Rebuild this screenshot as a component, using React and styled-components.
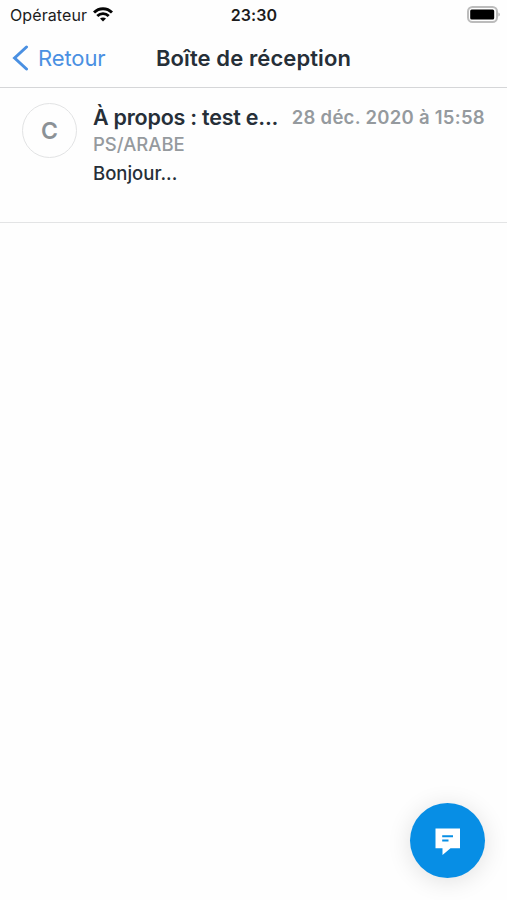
import React from "react";
import styled, { createGlobalStyle } from "styled-components";

const GlobalStyle = createGlobalStyle`
  * { box-sizing: border-box; }
  body { margin: 0; background: #fefefe; }
`;

const Screen = styled.div`
  width: 100%;
  height: 900px;
  display: flex;
  flex-direction: column;
  background: #fefefe;
  color: #262f38;
  font-family: Inter, "Liberation Sans", sans-serif;
  overflow: hidden;
`;

const StatusBar = styled.header`
  height: 30px;
  flex: none;
  display: grid;
  grid-template-columns: 1fr auto 1fr;
  align-items: center;
  padding: 0 7px 0 10px;
  color: #1c1c1c;
`;

const Carrier = styled.div`
  display: flex;
  align-items: center;
  gap: 6px;
  font-size: 16px;
  line-height: 30px;
  letter-spacing: 0.1px;
`;

const WifiIcon = styled.svg`
  display: block;
  margin-bottom: 1px;
`;

const Clock = styled.time`
  font-size: 16px;
  font-weight: 600;
  line-height: 30px;
  letter-spacing: 0.1px;
  margin-right: 2px;
`;

const BatteryIcon = styled.svg`
  justify-self: end;
  display: block;
  margin-bottom: 2px;
`;

const NavBar = styled.nav`
  height: 58px;
  flex: none;
  display: grid;
  grid-template-columns: 1fr auto 1fr;
  align-items: center;
  padding: 0 12px 2px;
  border-bottom: 1px solid #d5d6d8;
`;

const BackButton = styled.button`
  display: flex;
  align-items: center;
  gap: 9px;
  padding: 0;
  border: 0;
  background: none;
  color: #4a90e2;
  font: 400 22px/28px Inter, sans-serif;
  letter-spacing: -0.1px;
`;

const Title = styled.h1`
  margin: 0;
  font-size: 22px;
  font-weight: 600;
  line-height: 28px;
  letter-spacing: 0.1px;
`;

const MessageRow = styled.article`
  height: 135px;
  flex: none;
  display: flex;
  gap: 16px;
  padding: 15px 22px 0;
  border-bottom: 1px solid #e3e4e5;
`;

const Avatar = styled.div`
  width: 55px;
  height: 55px;
  flex: none;
  display: flex;
  align-items: center;
  justify-content: center;
  border: 1px solid #e2e3e4;
  border-radius: 50%;
  color: #8b9196;
  font-size: 23px;
  font-weight: 600;
`;

const MessageBody = styled.div`
  flex: 1;
  min-width: 0;
`;

const Heading = styled.div`
  display: flex;
  justify-content: space-between;
  height: 27px;
  line-height: 28px;
  white-space: nowrap;
`;

const Subject = styled.span`
  font-size: 21.5px;
  font-weight: 600;
  letter-spacing: -0.23px;
`;

const SentAt = styled.time`
  color: #959a9e;
  font-size: 18.5px;
  font-weight: 600;
  letter-spacing: 0.28px;
`;

const Sender = styled.div`
  color: #959a9e;
  font-size: 18.5px;
  font-weight: 500;
  line-height: 28px;
`;

const Preview = styled.div`
  font-size: 18.5px;
  font-weight: 500;
  line-height: 31px;
`;

const ComposeButton = styled.button`
  position: absolute;
  left: 410px;
  top: 803px;
  width: 75px;
  height: 75px;
  display: flex;
  align-items: center;
  justify-content: center;
  padding: 0;
  border: 0;
  border-radius: 50%;
  background: #078ee5;
  box-shadow: 0 3px 24px rgba(0, 0, 0, 0.12);
`;

export default function App() {
  return (
    <Screen>
      <GlobalStyle />
      <StatusBar>
        <Carrier>
          <span>Opérateur</span>
          <WifiIcon width="20" height="15" viewBox="0 0 20 15" fill="none" stroke="#050505" strokeWidth="2.9">
            <path d="M1 5.5C6 .4 14 .4 19 5.5" />
            <path d="M4.3 9C7.6 5.8 12.4 5.8 15.7 9" />
            <path d="M10 14.6 7 11.6C8.8 10.1 11.2 10.1 13 11.6Z" fill="#050505" stroke="none" />
          </WifiIcon>
        </Carrier>
        <Clock>23:30</Clock>
        <BatteryIcon width="33" height="17" viewBox="0 0 33 17">
          <rect x="1" y="1" width="29" height="15" rx="4.5" fill="#fefefe" stroke="#bcbcbc" strokeWidth="2" />
          <rect x="3.2" y="3.5" width="24" height="10" rx="1.5" fill="#000" />
          <path d="M31.3 6.5Q33 7 33 8.5T31.3 10.5Z" fill="#bcbcbc" />
        </BatteryIcon>
      </StatusBar>
      <NavBar>
        <BackButton>
          <svg width="17" height="26" viewBox="0 0 17 26" fill="none" stroke="currentColor" strokeWidth="3" strokeLinecap="round">
            <path d="M14.5 2 2.6 13 14.5 24" />
          </svg>
          <span>Retour</span>
        </BackButton>
        <Title>Boîte de réception</Title>
      </NavBar>
      <MessageRow>
        <Avatar>C</Avatar>
        <MessageBody>
          <Heading>
            <Subject>À propos : test e...</Subject>
            <SentAt>28 déc. 2020 à 15:58</SentAt>
          </Heading>
          <Sender>PS/ARABE</Sender>
          <Preview>Bonjour...</Preview>
        </MessageBody>
      </MessageRow>
      <ComposeButton aria-label="Nouveau message">
        <svg width="26" height="28" viewBox="0 0 26 28">
          <path d="M.5 1.6H25V21.3H15.5L7.5 28V21.3H.5Z" fill="#fff" />
          <path d="M7.2 9.3H18M7.2 13.5H13.5" stroke="#078ee5" strokeWidth="1.9" />
        </svg>
      </ComposeButton>
    </Screen>
  );
}
